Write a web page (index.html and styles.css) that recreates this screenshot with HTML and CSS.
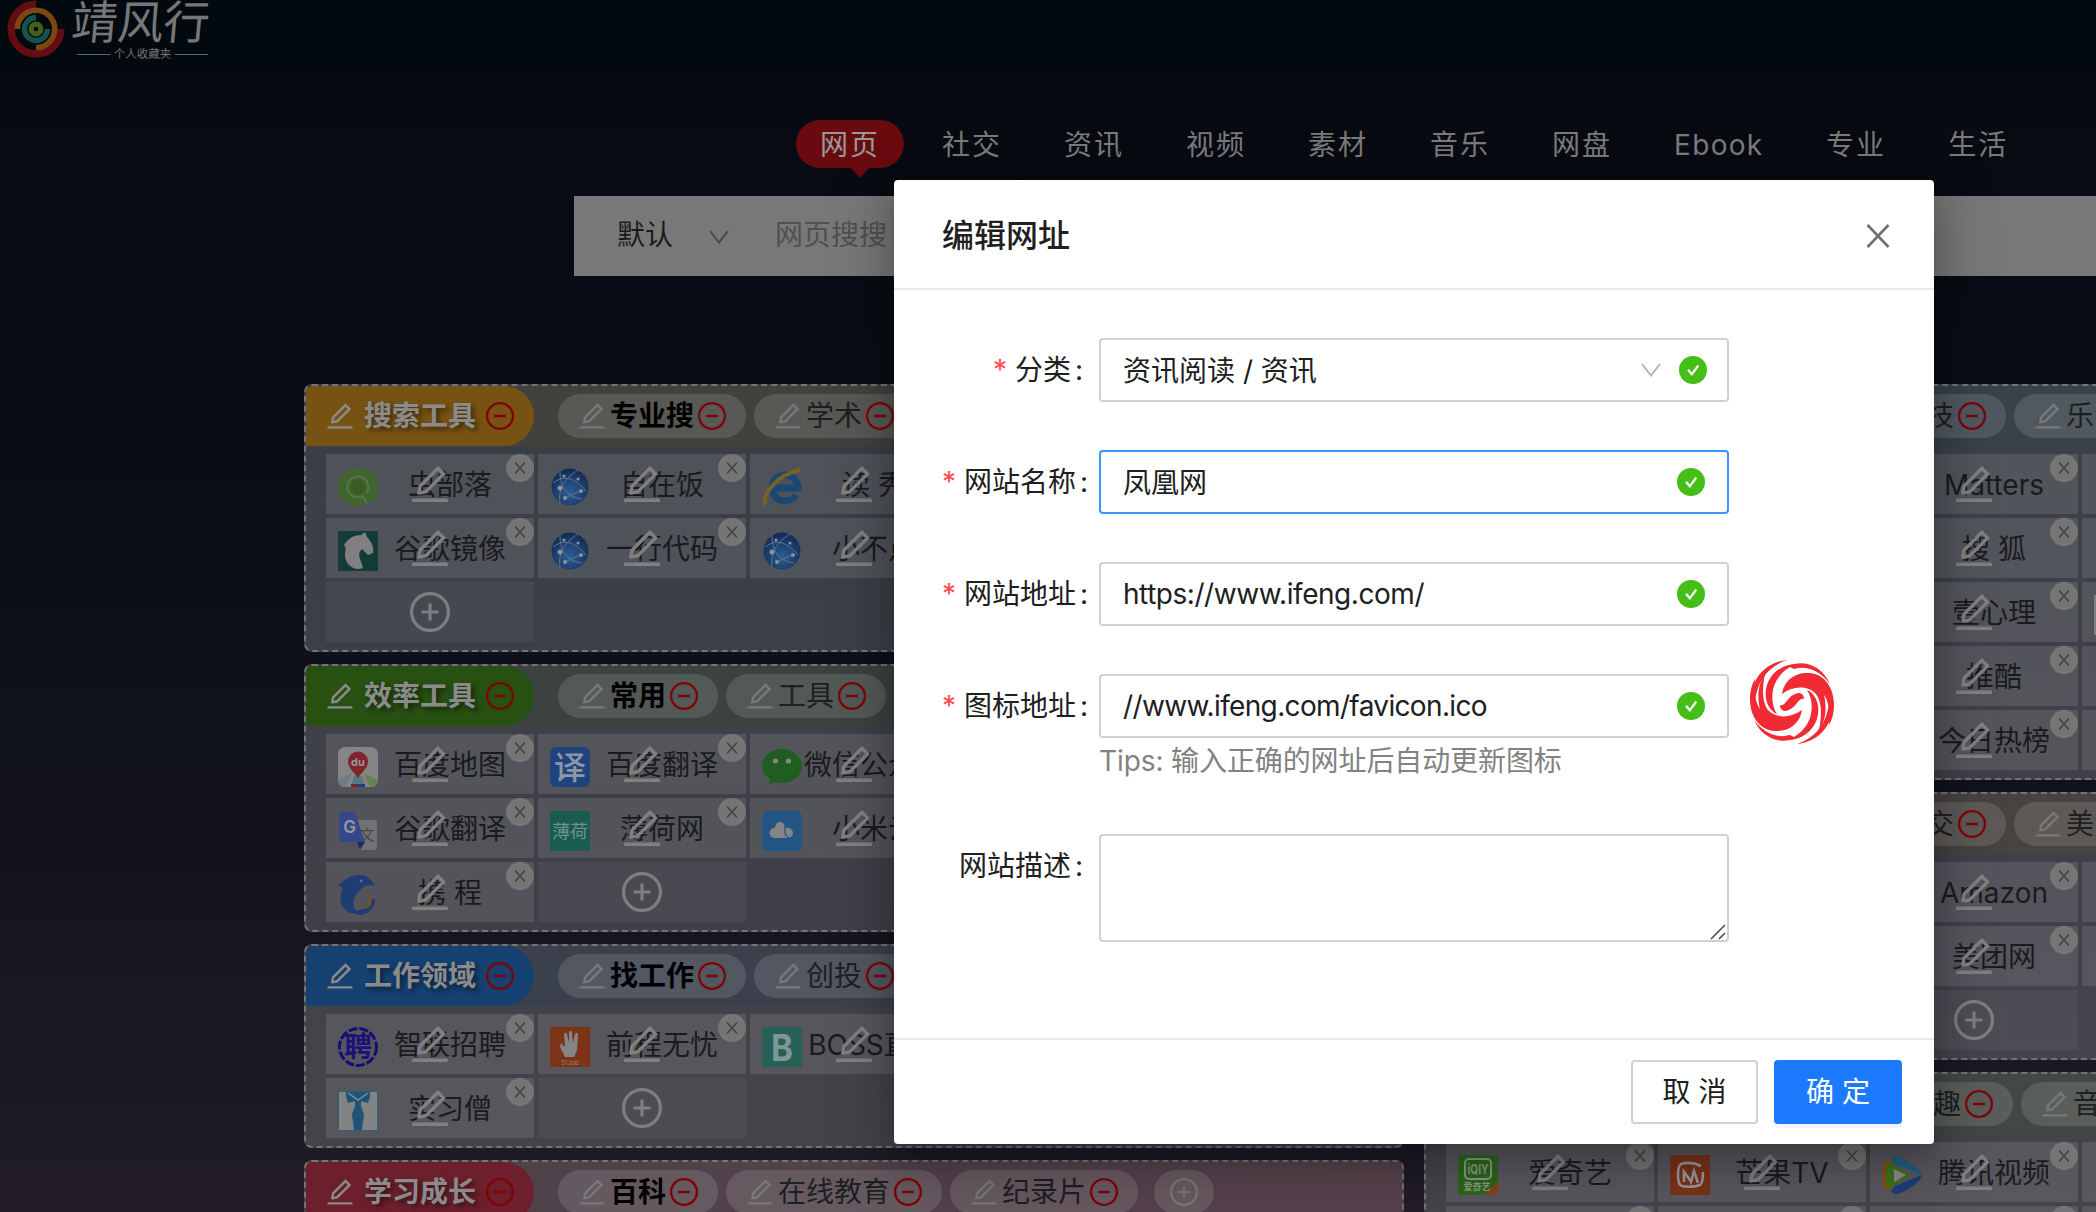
FILE: index.html
```html
<!DOCTYPE html>
<html lang="zh-CN">
<head>
<meta charset="utf-8">
<title>靖风行</title>
<link rel="stylesheet" href="styles.css">
</head>
<body>
<svg class="defs" width="0" height="0">
  <symbol id="edit" viewBox="0 0 1024 1024"><path fill="currentColor" d="M257.7 752c2 0 4-.2 6-.5L431.9 722c2-.4 3.9-1.3 5.3-2.8l423.9-423.9a9.96 9.96 0 0 0 0-14.1L694.9 114.9c-1.9-1.9-4.4-2.9-7.1-2.9s-5.2 1-7.1 2.9L256.8 538.8c-1.5 1.5-2.4 3.3-2.8 5.3l-29.5 168.2a33.5 33.5 0 0 0 9.4 29.8c6.6 6.4 14.9 9.9 23.8 9.9zm67.4-174.4L687.8 215l73.3 73.3-362.7 362.6-88.9 15.7 15.6-89zM880 836H144c-17.7 0-32 14.3-32 32v36c0 4.4 3.6 8 8 8h784c4.4 0 8-3.6 8-8v-36c0-17.7-14.3-32-32-32z"/></symbol>
  <symbol id="minus" viewBox="0 0 32 32"><g fill="none" stroke="currentColor" stroke-width="2.3"><circle cx="16" cy="16" r="12.9"/><path d="M10 16h12"/></g></symbol>
  <symbol id="plus" viewBox="0 0 40 40"><g fill="none" stroke="currentColor" stroke-width="3.2"><circle cx="20" cy="20" r="18.4"/><path d="M11.500 20h17M20 11.500v17"/></g></symbol>
  <symbol id="cross" viewBox="0 0 24 24"><path d="M1.500 1l21 22M22.500 1l-21 22" fill="none" stroke="currentColor" stroke-width="2.600"/></symbol>
  <symbol id="x" viewBox="0 0 12 12"><path d="M1 .500l10 11M11 .500L1 11.500" fill="none" stroke="currentColor" stroke-width="1.700"/></symbol>
  <symbol id="down" viewBox="0 0 20 14"><path d="M1 1l9 11.500L19 1" fill="none" stroke="currentColor" stroke-width="2"/></symbol>
  <symbol id="ok" viewBox="0 0 28 28"><circle cx="14" cy="14" r="14" fill="#45be17"/><path d="M9 13.700l3.800 4.600 6.500-8.800" fill="none" stroke="#fff" stroke-width="2.200"/></symbol>
  <symbol id="globe" viewBox="0 0 40 40"><radialGradient id="gg" cx=".5" cy=".65" r=".6"><stop offset="0" stop-color="#2b5f92"/><stop offset="1" stop-color="#142c58"/></radialGradient><circle cx="20" cy="20" r="18.500" fill="url(#gg)"/><g fill="none" stroke="#5d7792" stroke-width="1"><path d="M3 16C14 8 24 10 36 24M10 4c0 16 6 26 22 28M28 3C14 12 8 22 10 36M15 31l17-8"/></g><g fill="#8a9298"><circle cx="10" cy="21" r="2.500"/><circle cx="15" cy="31" r="2"/><circle cx="31" cy="24" r="2"/><circle cx="14" cy="9" r="1.600"/><circle cx="28" cy="12" r="1.500"/></g></symbol>
</svg>

<header class="topbar">
  <svg class="logo-mark" viewBox="0 0 58 58" fill="none">
    <path d="M29 4.200A24.800 24.800 0 1 0 53.800 29" stroke="#640c13" stroke-width="7.500"/>
    <path d="M10.300 29A18.700 18.700 0 1 1 29 47.700" stroke="#7d4713" stroke-width="5.600"/>
    <path d="M29 17.500A11.500 11.500 0 1 0 40.500 29" stroke="#17514b" stroke-width="5.400"/>
    <circle cx="29" cy="29" r="4.800" stroke="#41601c" stroke-width="5.200"/>
  </svg>
  <div class="brand">
    <div class="brand-name">靖风行</div>
    <div class="brand-sub"><i></i><span>个人收藏夹</span><i></i></div>
  </div>
</header>

<nav class="nav">
  <a class="active">网页</a><a>社交</a><a>资讯</a><a>视频</a><a>素材</a><a>音乐</a><a>网盘</a><a class="wide">Ebook</a><a>专业</a><a>生活</a>
</nav>

<div class="search"><span class="engine">默认</span><svg class="caret"><use href="#down"/></svg><span class="hint">网页搜搜</span></div>

<main class="board">
  <div class="col">
    <section class="panel p1">
      <div class="head"><h2 class="orange"><svg><use href="#edit"/></svg>搜索工具<svg class="red"><use href="#minus"/></svg></h2>
        <div class="pill on"><svg><use href="#edit"/></svg>专业搜<svg class="red"><use href="#minus"/></svg></div>
        <div class="pill"><svg><use href="#edit"/></svg>学术<svg class="red"><use href="#minus"/></svg></div></div>
      <div class="row">
        <div class="tile"><svg class="ico" viewBox="0 0 40 40"><path d="M20 0l16 7q3 2 4 13-1 11-4 13l-16 7-16-7Q1 31 0 20 1 9 4 7z" fill="#41662d"/><path d="M25 29a10.500 10.500 0 1 1 3-2.500M24 28l5 9" fill="none" stroke="#5b7152" stroke-width="2"/><circle cx="20" cy="20" r="7.500" fill="#3a5c22"/></svg><span>虫部落</span><svg class="pen"><use href="#edit"/></svg><b><svg><use href="#x"/></svg></b></div>
        <div class="tile"><svg class="ico"><use href="#globe"/></svg><span>自在饭</span><svg class="pen"><use href="#edit"/></svg><b><svg><use href="#x"/></svg></b></div>
        <div class="tile"><svg class="ico" viewBox="0 0 40 40"><path d="M34 28a13 13 0 1 1 2-7H13" fill="none" stroke="#1b4872" stroke-width="7"/><path d="M4 38C-2 32 12 8 38 3" fill="none" stroke="#7a6125" stroke-width="4"/></svg><span>读 秀</span><svg class="pen"><use href="#edit"/></svg></div>
      </div>
      <div class="row">
        <div class="tile"><svg class="ico" viewBox="0 0 40 40"><path d="M0 0h40v40H0z" fill="#153b38"/><path d="M6 14c4-6 9-10 17-10l4-3 2 5c5 5 7 11 6 16l-5 2-6-6c-6 5-1 10 1 19-8 3-15-2-17-8-3-8 2-10-2-15z" fill="#808080"/></svg><span>谷歌镜像</span><svg class="pen"><use href="#edit"/></svg><b><svg><use href="#x"/></svg></b></div>
        <div class="tile"><svg class="ico"><use href="#globe"/></svg><span>一行代码</span><svg class="pen"><use href="#edit"/></svg><b><svg><use href="#x"/></svg></b></div>
        <div class="tile"><svg class="ico"><use href="#globe"/></svg><span>小不点</span><svg class="pen"><use href="#edit"/></svg></div>
      </div>
      <div class="row"><div class="tile add"><svg><use href="#plus"/></svg></div></div>
    </section>

    <section class="panel p2">
      <div class="head"><h2 class="green"><svg><use href="#edit"/></svg>效率工具<svg class="red"><use href="#minus"/></svg></h2>
        <div class="pill on"><svg><use href="#edit"/></svg>常用<svg class="red"><use href="#minus"/></svg></div>
        <div class="pill"><svg><use href="#edit"/></svg>工具<svg class="red"><use href="#minus"/></svg></div></div>
      <div class="row">
        <div class="tile"><svg class="ico" viewBox="0 0 40 40"><rect width="40" height="40" rx="7" fill="#858585"/><path d="M0 33l14-7-6 14H5q-4-1-5-7z" fill="#6d7d83"/><path d="M40 33l-14-7 6 14h3q4-1 5-7z" fill="#66814d"/><path d="M16 29h8l3 11H13z" fill="#557982"/><path d="M13 37h7v3h-7z" fill="#802129"/><path d="M20 37h7v3h-7z" fill="#213d83"/><path d="M20 31C14 23 10 20 10 14.500a10 10 0 0 1 20 0C30 20 26 23 20 31z" fill="#7e242b"/><text x="20" y="19" font-size="11" text-anchor="middle" font-weight="700" fill="#999">du</text></svg><span>百度地图</span><svg class="pen"><use href="#edit"/></svg><b><svg><use href="#x"/></svg></b></div>
        <div class="tile"><svg class="ico" viewBox="0 0 40 40"><rect width="40" height="40" rx="6" fill="#1e437d"/><text x="20" y="32" font-size="32" text-anchor="middle" font-weight="500" fill="#8a97a8">译</text></svg><span>百度翻译</span><svg class="pen"><use href="#edit"/></svg><b><svg><use href="#x"/></svg></b></div>
        <div class="tile"><svg class="ico" viewBox="0 0 40 40"><path d="M20 2c11 0 20 8 20 17s-9 17-20 17q-4 0-8-1l-5 3 1-6C3 29 0 24 0 19 0 10 9 2 20 2z" fill="#1f5d20"/><circle cx="13.500" cy="14" r="2.600" fill="#858585"/><circle cx="26.500" cy="14" r="2.600" fill="#858585"/></svg><span>微信公众号</span><svg class="pen"><use href="#edit"/></svg></div>
      </div>
      <div class="row">
        <div class="tile"><svg class="ico" viewBox="0 0 40 40"><path d="M16 9h20q3 0 3 3v24q0 3-3 3H22z" fill="#727272"/><text x="29" y="29" font-size="15" text-anchor="middle" fill="#3d4a4e">文</text><path d="M4 1h13l10 30H4q-3 0-3-3V4q0-3 3-3z" fill="#33498a"/><path d="M19 31h8l-5 8z" fill="#202a5b"/><text x="11.500" y="22" font-size="17" text-anchor="middle" font-weight="600" fill="#999">G</text></svg><span>谷歌翻译</span><svg class="pen"><use href="#edit"/></svg><b><svg><use href="#x"/></svg></b></div>
        <div class="tile"><svg class="ico" viewBox="0 0 40 40"><rect width="40" height="40" rx="2" fill="#1b5c50"/><text x="20" y="27" font-size="18" text-anchor="middle" fill="#6f938c">薄荷</text></svg><span>薄荷网</span><svg class="pen"><use href="#edit"/></svg><b><svg><use href="#x"/></svg></b></div>
        <div class="tile"><svg class="ico" viewBox="0 0 40 40"><rect width="40" height="40" rx="6" fill="#225484"/><path d="M12 27a5 5 0 1 1 1-10c0-8 10-8 10 0 9-2 11 9 3 10z" fill="#858585"/><path d="M23 15v6q0 4 4 6" fill="none" stroke="#225484" stroke-width="1.200"/></svg><span>小米云</span><svg class="pen"><use href="#edit"/></svg></div>
      </div>
      <div class="row">
        <div class="tile"><svg class="ico" viewBox="0 0 40 40"><path d="M0 10C6 6 10 1 19 0c8-1 15 4 18 11-7-2-11 0-15 4-5 5-8 11-6 18l6 6-10-1C2 33 0 24 5 13z" fill="#1f3c75"/><path d="M12 35c12 3 19-5 20-10l5-1c1 9-9 17-17 16z" fill="#1f3c75"/><path d="M23 34c5-2 9-8 8-13 6 6 1 14-8 13z" fill="#725221"/><circle cx="23" cy="6" r="1.500" fill="#606a80"/></svg><span>携 程</span><svg class="pen"><use href="#edit"/></svg><b><svg><use href="#x"/></svg></b></div>
        <div class="tile add"><svg><use href="#plus"/></svg></div>
      </div>
    </section>

    <section class="panel p3">
      <div class="head"><h2 class="blue"><svg><use href="#edit"/></svg>工作领域<svg class="red"><use href="#minus"/></svg></h2>
        <div class="pill on"><svg><use href="#edit"/></svg>找工作<svg class="red"><use href="#minus"/></svg></div>
        <div class="pill"><svg><use href="#edit"/></svg>创投<svg class="red"><use href="#minus"/></svg></div></div>
      <div class="row">
        <div class="tile"><svg class="ico" viewBox="0 0 40 40"><circle cx="20" cy="20" r="18.500" fill="none" stroke="#140f75" stroke-width="3" stroke-dasharray="9 2"/><text x="20" y="30" font-size="28" text-anchor="middle" font-weight="700" fill="#19137a">聘</text></svg><span>智联招聘</span><svg class="pen"><use href="#edit"/></svg><b><svg><use href="#x"/></svg></b></div>
        <div class="tile"><svg class="ico" viewBox="0 0 40 40"><path d="M0 0h40v40H0z" fill="#7c3419"/><path d="M15 30l-5-10 1-4 4 4-1-13q2-3 3 0l2 9V5q2-2 3 0l1 11 2-9q2-2 3 0l-1 16-3 7z" fill="#858585"/><text x="20" y="38" font-size="6.500" text-anchor="middle" fill="#9a8073">51Job</text></svg><span>前程无忧</span><svg class="pen"><use href="#edit"/></svg><b><svg><use href="#x"/></svg></b></div>
        <div class="tile"><svg class="ico" viewBox="0 0 40 40"><path d="M0 0h40v40H0z" fill="#276056"/><text x="20" y="34" font-size="37" text-anchor="middle" font-weight="700" fill="#7e9893" textLength="22" lengthAdjust="spacingAndGlyphs">B</text></svg><span>BOSS直聘</span><svg class="pen"><use href="#edit"/></svg></div>
      </div>
      <div class="row">
        <div class="tile"><svg class="ico" viewBox="0 0 40 40"><path d="M.5.500h39v39H.5z" fill="#838383" stroke="#2a6080"/><path d="M8 1h24v5l-2 6-7-2v5l3 8-2 16h-8l-2-16 3-8v-5l-7 2-2-6z" fill="#205476"/><path d="M10 2l10 7 10-7" stroke="#7d8e97" stroke-width="1.500" fill="none"/></svg><span>实习僧</span><svg class="pen"><use href="#edit"/></svg><b><svg><use href="#x"/></svg></b></div>
        <div class="tile add"><svg><use href="#plus"/></svg></div>
      </div>
    </section>

    <section class="panel p4">
      <div class="head"><h2 class="rose"><svg><use href="#edit"/></svg>学习成长<svg class="red"><use href="#minus"/></svg></h2>
        <div class="pill on"><svg><use href="#edit"/></svg>百科<svg class="red"><use href="#minus"/></svg></div>
        <div class="pill"><svg><use href="#edit"/></svg>在线教育<svg class="red"><use href="#minus"/></svg></div>
        <div class="pill"><svg><use href="#edit"/></svg>纪录片<svg class="red"><use href="#minus"/></svg></div>
        <div class="pill new"><svg><use href="#plus"/></svg></div></div>
    </section>
  </div>

  <div class="col">
    <section class="panel r1">
      <div class="head tail"><div class="pill"><svg><use href="#edit"/></svg>科技<svg class="red"><use href="#minus"/></svg></div><div class="pill"><svg><use href="#edit"/></svg>乐活<svg class="red"><use href="#minus"/></svg></div></div>
      <div class="row third"><div class="tile"><i></i><span>Matters</span><svg class="pen"><use href="#edit"/></svg><b><svg><use href="#x"/></svg></b></div><div class="tile"></div></div>
      <div class="row third"><div class="tile"><i></i><span>搜 狐</span><svg class="pen"><use href="#edit"/></svg><b><svg><use href="#x"/></svg></b></div><div class="tile"></div></div>
      <div class="row third"><div class="tile"><i></i><span>壹心理</span><svg class="pen"><use href="#edit"/></svg><b><svg><use href="#x"/></svg></b></div><div class="tile"><i class="ico pale"></i></div></div>
      <div class="row third"><div class="tile"><i></i><span>推酷</span><svg class="pen"><use href="#edit"/></svg><b><svg><use href="#x"/></svg></b></div><div class="tile"></div></div>
      <div class="row third"><div class="tile"><i></i><span>今日热榜</span><svg class="pen"><use href="#edit"/></svg><b><svg><use href="#x"/></svg></b></div><div class="tile"></div></div>
    </section>
    <section class="panel r2">
      <div class="head tail"><div class="pill"><svg><use href="#edit"/></svg>社交<svg class="red"><use href="#minus"/></svg></div><div class="pill"><svg><use href="#edit"/></svg>美食<svg class="red"><use href="#minus"/></svg></div></div>
      <div class="row third"><div class="tile"><i></i><span>Amazon</span><svg class="pen"><use href="#edit"/></svg><b><svg><use href="#x"/></svg></b></div><div class="tile"></div></div>
      <div class="row third"><div class="tile"><i></i><span>美团网</span><svg class="pen"><use href="#edit"/></svg><b><svg><use href="#x"/></svg></b></div><div class="tile"></div></div>
      <div class="row third"><div class="tile add"><svg><use href="#plus"/></svg></div></div>
    </section>
    <section class="panel r3">
      <div class="head tail more"><div class="pill"><svg><use href="#edit"/></svg>兴趣<svg class="red"><use href="#minus"/></svg></div><div class="pill"><svg><use href="#edit"/></svg>音乐<svg class="red"><use href="#minus"/></svg></div></div>
      <div class="row">
        <div class="tile"><svg class="ico" viewBox="0 0 40 40"><path d="M0 0h40v40H0z" fill="#2c661c"/><path d="M40 26v14H25z" fill="#80461c"/><rect x="7" y="4" width="26" height="20" rx="4" fill="none" stroke="#8a9a85" stroke-width="2"/><text x="20" y="19" font-size="13" text-anchor="middle" font-weight="700" fill="#8a9a85" textLength="21" lengthAdjust="spacingAndGlyphs">iQIY</text><text x="19" y="35" font-size="9" text-anchor="middle" font-weight="700" fill="#8a9a85">爱奇艺</text></svg><span>爱奇艺</span><svg class="pen"><use href="#edit"/></svg><b><svg><use href="#x"/></svg></b></div>
        <div class="tile"><svg class="ico" viewBox="0 0 40 40"><path d="M0 0h40v40H0z" fill="#7b3219"/><path d="M31 11q-10-5-20-2-3 2-3 11 0 10 4 11 9 2 18-1 3-2 3-13M14 27V17l6 8 1 2 3-11 4 12" fill="none" stroke="#999" stroke-width="2.600"/></svg><span>芒果TV</span><svg class="pen"><use href="#edit"/></svg><b><svg><use href="#x"/></svg></b></div>
        <div class="tile"><svg class="ico" viewBox="0 0 40 40"><path d="M9 3q4-5 14 2 17 10 17 15L10 8z" fill="#206080"/><path d="M9 36q4 6 14 0 17-10 17-16L13 31z" fill="#1e3e7b"/><path d="M2 7q5-4 9 0v26q-5 4-9 0-4-13 0-26z" fill="#805019"/><path d="M6 7l22 13L6 34q-4-14 0-27z" fill="#3d731d"/><path d="M12 14l12 6-12 7z" fill="#8c8c8c"/></svg><span>腾讯视频</span><svg class="pen"><use href="#edit"/></svg><b><svg><use href="#x"/></svg></b></div>
        <div class="tile"></div>
      </div>
      <div class="row"><div class="tile"><b></b></div><div class="tile"><b></b></div><div class="tile"><b></b></div><div class="tile"></div></div>
    </section>
  </div>
</main>

<div class="modal">
  <div class="modal-head"><span>编辑网址</span><svg class="close"><use href="#cross"/></svg></div>
  <div class="modal-body">
    <div class="field short"><label><em>*</em>分类<u>:</u></label><div class="input">资讯阅读 / 资讯<svg class="caret"><use href="#down"/></svg><svg class="ok"><use href="#ok"/></svg></div></div>
    <div class="field"><label><em>*</em>网站名称<u>:</u></label><div class="input focus">凤凰网<svg class="ok"><use href="#ok"/></svg></div></div>
    <div class="field"><label><em>*</em>网站地址<u>:</u></label><div class="input url">https://www.ifeng.com/<svg class="ok"><use href="#ok"/></svg></div></div>
    <div class="field"><label><em>*</em>图标地址<u>:</u></label><div class="stack"><div class="input url tight">//www.ifeng.com/favicon.ico<svg class="ok"><use href="#ok"/></svg></div><p>Tips: 输入正确的网址后自动更新图标</p></div>
      <svg class="favicon" viewBox="0 0 84 84"><g id="arm" fill="#f12b33"><path d="M32 34C34 20 46 12 59 13 75 14 84 28 84 45 84 53 82 60 79 65 80 52 79 42 74 35 77 48 76 60 69 70 72 56 72 42 66 34 59 26 44 25 32 34z"/><path d="M57 30C66 34 71 46 67 59 63 71 52 80 37 80 47 77 56 69 60 58 63 48 62 38 57 30z"/><path d="M38 6C54-1 72 6 80 24 71 12 58 5 44 9z"/><path d="M1 38C2 17 17 2 37 0 19 6 7 20 5 42z"/><path d="M30 45C37 47 37 33 51 33 44 37 46 45 38 50 34 52 30 50 30 45z"/></g><use href="#arm" transform="rotate(180 42 42)"/></svg>
    </div>
    <div class="field short last"><label>网站描述<u>:</u></label><div class="area"><svg viewBox="0 0 16 16"><path d="M1 15L15 1M9 15l6-6" stroke="#444" stroke-width="1.500"/></svg></div></div>
  </div>
  <div class="modal-foot"><button>取 消</button><button class="primary">确 定</button></div>
</div>
</body>
</html>
```
FILE: styles.css
```css
* { box-sizing: border-box; }
html { overflow: hidden; }
body {
  margin: 0; width: 2096px; height: 1212px; overflow: hidden; position: relative;
  font: 28px/44px Inter, "Noto Sans CJK SC", sans-serif; color: #1a1b1d;
  background: linear-gradient(#07090f 0, #080b13 200px, #0a0e18 500px, #11121d 800px, #211c28 1212px);
}
svg { display: block; flex: none; overflow: visible; }
.defs { position: absolute; }
i, em, u { font-style: normal; text-decoration: none; }

.topbar { height: 76px; background: #020a10; display: flex; padding-left: 7px; }
.logo-mark { width: 58px; height: 58px; }
.brand { width: 146px; margin-left: 7px; color: #777; }
.brand-name { font-size: 46px; line-height: 50px; height: 46px; margin-top: -3px; white-space: nowrap; transform: skewX(-5deg); }
.brand-sub { display: flex; align-items: center; justify-content: center; gap: 4px; font-size: 11.500px; line-height: 18px; margin: 2px 0 0 -5px; }
.brand-sub i { width: 33px; height: 1px; background: #666; }

.nav { display: flex; gap: 14px; padding: 44px 0 0 796px; height: 120px; color: #7b7b7b; letter-spacing: 2px; }
.nav a { height: 48px; line-height: 50px; padding: 0 24px; white-space: nowrap; flex: none; }
.nav .wide { width: 138px; letter-spacing: 1.300px; }
.nav .active { background: #690a0f; border-radius: 24px; color: #999; position: relative; }
.nav .active::after { content: ""; position: absolute; left: 54px; top: 47px; border: 10px solid transparent; border-top: 11px solid #690a0f; border-bottom: 0; }

.search { margin-left: 574px; height: 80px; background: #787878; display: flex; align-items: center; padding: 0 0 2px 43px; }
.search .engine { width: 92px; }
.search .caret { width: 20px; height: 14px; color: #484848; margin-top: 3px; }
.search .hint { margin-left: 46px; color: #505050; }

.board { display: flex; gap: 20px; margin: 108px 0 0 304px; width: 2220px; }
.col { width: 1100px; display: flex; flex-direction: column; gap: 12px; }
.panel { border: 2px dashed #747476; border-radius: 8px; padding-bottom: 4px; overflow: hidden; background: linear-gradient(#3a3e44, #3c3f49); }
.head { height: 60px; display: flex; align-items: center; gap: 8px; margin-bottom: 8px; background: #41413e; line-height: 46px; }
.head h2 { margin: 0 16px 0 0; width: 228px; height: 60px; padding: 0 18px; border-radius: 0 30px 30px 0; font-size: 28px; font-weight: 600; display: flex; align-items: center; gap: 8px; color: #8b8b8b; text-shadow: 3px 3px 5px rgba(0,0,0,.5); white-space: nowrap; }
.head svg { width: 32px; height: 32px; }
.head .red { color: #7f0408; }
.orange { background: #775313; }
.green { background: #275011; }
.blue { background: #154070; }
.rose { background: #6d202c; }
.pill { height: 44px; border-radius: 22px; padding: 0 18px; display: flex; align-items: center; gap: 2px; background: rgba(255,255,255,.12); color: #1d1f22; white-space: nowrap; flex: none; }
.pill svg { color: #777879; }
.pill.on { color: #000; font-weight: 700; }
.pill.new { margin-left: 8px; padding: 0 16px; }
.pill.new svg { width: 28px; height: 28px; }
.row { display: flex; gap: 4px; padding-left: 20px; margin-bottom: 4px; }
.row.third { padding-left: 444px; }
.tile { width: 208px; height: 60px; flex: none; position: relative; display: flex; background: rgba(255,255,255,.105); padding-left: 12px; }
.ico, .tile > i { width: 40px; height: 40px; margin-top: 13px; flex: none; }
.pale { background: #808080; }
.tile span { flex: 1; margin: 0 12px 0 0; line-height: 62px; height: 60px; white-space: pre; display: flex; justify-content: center; min-width: 0; }
.tile .pen { position: absolute; left: 81px; top: 7px; width: 46px; height: 46px; color: #808081; }
.tile b { position: absolute; right: 0; top: 0; width: 28px; height: 28px; border-radius: 50%; background: #757575; color: #45454a; display: grid; place-items: center; }
.tile b svg { width: 12px; height: 12px; }
.tile.add { background: rgba(255,255,255,.05); padding: 0; align-items: center; justify-content: center; color: #7e7e7f; }
.tile.add svg { width: 40px; height: 40px; }

.p2 { background: linear-gradient(#3f4248, #403f47); }
.p2 .head { background: #3b423f; }
.p3 { background: linear-gradient(#414348, #454349); }
.p3 .head { background: #3b404d; }
.p4 { background: #45404a; }
.p4 .head { background: linear-gradient(90deg, #4d424a, #57424c); }
.head.tail { padding-left: 420px; }
.head.more { padding-left: 427px; }
.r1 { background: linear-gradient(#3c4248, #414048); }
.r1 .head { background: #38424a; }
.r2 { background: linear-gradient(#3e3f49, #46434b); }
.r2 .head { background: #464340; }
.r3 { background: linear-gradient(#45444a, #47434b); }
.r3 .head { background: #444845; }

.modal { position: absolute; left: 894px; top: 180px; width: 1040px; height: 964px; background: #fff; border-radius: 4px; color: #202020; display: flex; flex-direction: column; box-shadow: 0 6px 12px -8px rgba(0,0,0,.12), 0 12px 32px rgba(0,0,0,.2), 0 18px 56px 16px rgba(0,0,0,.16); }
.modal-head { height: 110px; border-bottom: 2px solid #e9e9e9; display: flex; align-items: center; justify-content: space-between; padding: 3px 44px 0 48px; font-size: 32px; font-weight: 500; }
.close { width: 24px; height: 24px; color: #707070; }
.modal-body { flex: 1; padding-top: 48px; display: flex; flex-direction: column; gap: 48px; }
.field { display: flex; height: 64px; line-height: 64px; }
.field label { width: 205px; display: flex; justify-content: flex-end; white-space: nowrap; }
.field em { color: #ff4d4f; margin-right: 8px; }
.field u { margin: 0 11px 0 4px; }
.field.short u { margin-right: 16px; }
.input { width: 630px; height: 64px; line-height: 62px; border: 2px solid #d0d0d0; border-radius: 4px; padding: 0 22px; display: flex; white-space: pre; }
.input svg { align-self: center; }
.url { letter-spacing: -.45px; line-height: 61px; }
.tight { letter-spacing: -.65px; }
.input .caret { width: 20px; height: 14px; color: #b5b5b5; margin-left: auto; }
.input .ok { width: 28px; height: 28px; margin-left: auto; }
.input .caret + .ok { margin: 0 -2px 0 18px; }
.focus { border-color: #3b94ff; }
.stack p { margin: 0; line-height: 46px; color: #828282; letter-spacing: -.1px; }
.favicon { width: 84px; height: 84px; margin: -14px 0 0 21px; }
.last { margin-top: 48px; }
.area { width: 630px; height: 108px; border: 2px solid #d0d0d0; border-radius: 4px; display: flex; align-items: flex-end; justify-content: flex-end; padding: 1px 1px 0; }
.area svg { width: 16px; height: 16px; }
.modal-foot { height: 106px; border-top: 2px solid #e9e9e9; display: flex; justify-content: flex-end; gap: 16px; padding: 20px 32px; }
.modal-foot button { width: 127px; height: 64px; padding: 0; font: inherit; line-height: 61px; border: 2px solid #d0d0d0; border-radius: 4px; background: #fff; color: #202020; box-shadow: 0 4px 0 rgba(0,0,0,.015); }
.modal-foot .primary { width: 128px; background: #1b7aff; border-color: #1b7aff; color: #fff; box-shadow: 0 4px 0 rgba(0,0,0,.045); }
```
